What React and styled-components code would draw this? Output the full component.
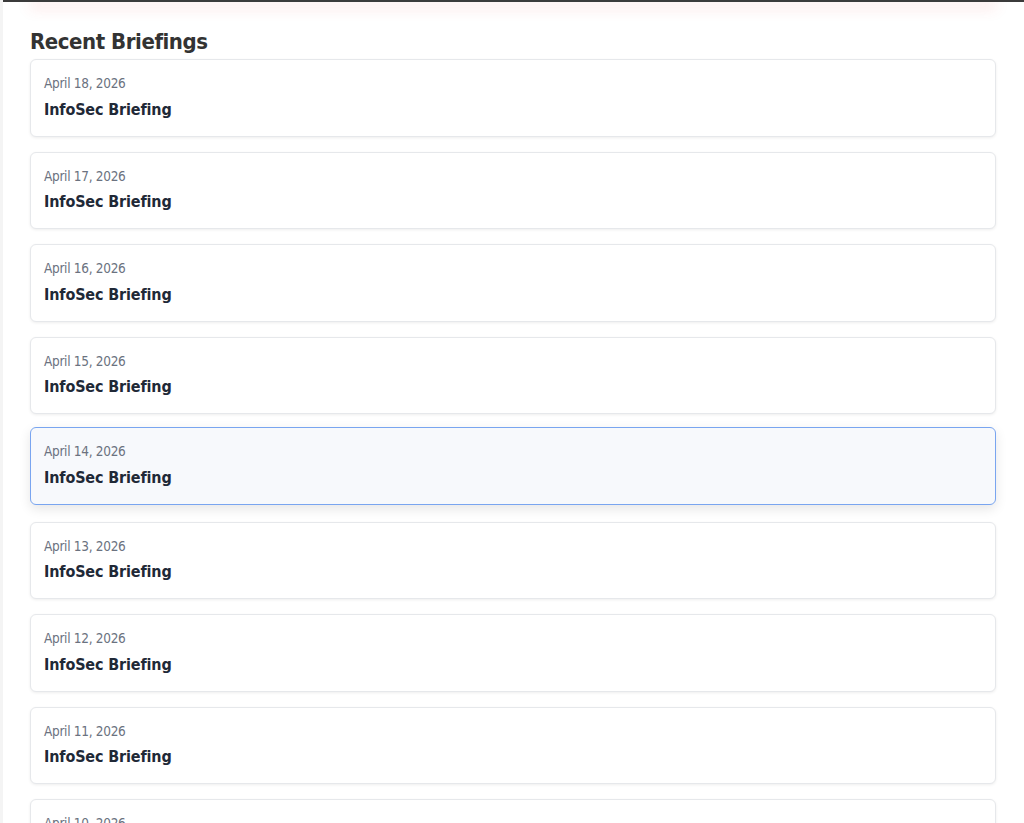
import React from "react";
import styled, { createGlobalStyle } from "styled-components";

const GlobalStyle = createGlobalStyle`
  html, body {
    margin: 0;
    padding: 0;
    background: #f4f4f4;
    font-family: "DejaVu Sans Condensed", "DejaVu Sans", Verdana, sans-serif;
  }
  * { box-sizing: border-box; }
`;

const Main = styled.main`
  margin-left: 3px;
  min-height: 823px;
  background: #ffffff;
  padding: 0 28px 40px 27px;
  overflow: hidden;
`;

const TopEdge = styled.div`
  height: 2px;
  margin: 0 -28px 0 -27px;
  background: #3b3b3b;
  position: relative;
  z-index: 1;
`;

const Glow = styled.div`
  height: 4px;
  margin: -4px 0 0;
  background: #fff;
  box-shadow: 0 5px 14px rgba(239, 68, 68, 0.26);
`;

const Heading = styled.h2`
  margin: 27px 0 4px;
  font-size: 22px;
  line-height: 26px;
  font-weight: 700;
  color: #333333;
  letter-spacing: -0.45px;
`;

const List = styled.div`
  display: flex;
  flex-direction: column;
  gap: 15px;
`;

const Card = styled.article`
  background: ${(p) => (p.$active ? "#f7f9fc" : "#ffffff")};
  border: 1px solid ${(p) => (p.$active ? "#79a5f0" : "#e6e8eb")};
  border-radius: 6px;
  padding: 14px 14px 14px 13px;
  box-shadow: ${(p) =>
    p.$active
      ? "0 4px 12px rgba(0, 0, 0, 0.10)"
      : "0 1px 3px rgba(0, 0, 0, 0.07)"};
  transform: ${(p) => (p.$active ? "translateY(-2px)" : "none")};
  display: flex;
  flex-direction: column;
  gap: 4px;
`;

const DateText = styled.div`
  font-size: 13.5px;
  line-height: 19.5px;
  color: #6b7280;
  letter-spacing: -0.3px;
`;

const Title = styled.h3`
  margin: 0;
  font-size: 16px;
  line-height: 24px;
  font-weight: 700;
  color: #1f2937;
  letter-spacing: -0.15px;
`;

const briefings = [
  "April 18, 2026",
  "April 17, 2026",
  "April 16, 2026",
  "April 15, 2026",
  "April 14, 2026",
  "April 13, 2026",
  "April 12, 2026",
  "April 11, 2026",
  "April 10, 2026",
];

export default function App() {
  return (
    <>
      <GlobalStyle />
      <Main>
        <TopEdge />
        <Glow />
        <Heading>Recent Briefings</Heading>
        <List>
          {briefings.map((d, i) => (
            <Card key={d} $active={i === 4}>
              <DateText>{d}</DateText>
              <Title>InfoSec Briefing</Title>
            </Card>
          ))}
        </List>
      </Main>
    </>
  );
}
